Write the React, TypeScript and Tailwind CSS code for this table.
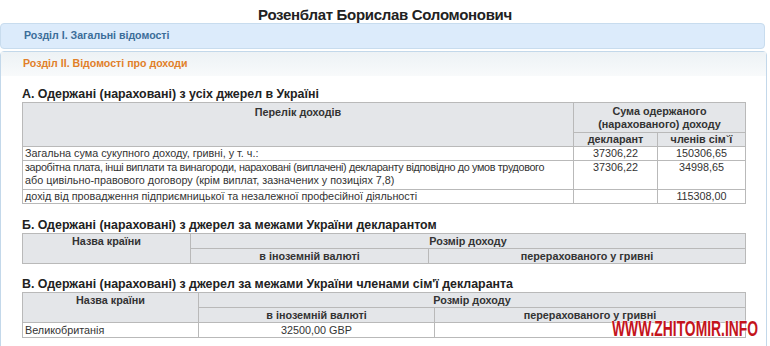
import React from 'react';

const cell = 'border border-[#b9b9b9] px-[2px] align-top';
const head = 'border border-[#b9b9b9] bg-[#e4e6e9] font-bold text-center align-top px-[2px]';

const App: React.FC = () => {
  return (
    <div
      className="relative w-[770px] h-[346px] overflow-hidden bg-white text-[#222]"
      style={{ fontFamily: '"Liberation Sans", Arial, sans-serif' }}
    >
      <h1 className="pt-[5px] h-[23px] text-center text-[15px] leading-[19px] tracking-[-0.3px] font-bold text-[#222]">
        Розенблат Борислав Соломонович
      </h1>

      <div className="w-[765px] h-[26px] flex items-center pl-[23px] bg-[#dcebfb] border border-[#c8dcee] rounded-[4px] text-[10.6px] font-bold text-[#3b6d99]">
        Розділ І. Загальні відомості
      </div>

      <div className="mt-[2px] w-[767px] h-[320px] border border-[#c3d8ea] rounded-t-[4px]">
        <div className="h-[24px] flex items-center pl-[22px] bg-gradient-to-b from-[#edf2f5] to-[#f8fafb] text-[10.6px] font-bold text-[#e17f29]">
          Розділ ІІ. Відомості про доходи
        </div>

        <div className="pl-[21px] text-[10.8px] leading-[13px] text-[#333]">
          <h2 className="mt-[10px] h-[16px] text-[12.4px] leading-[16px] font-bold text-[#222]">
            А. Одержані (нараховані) з усіх джерел в Україні
          </h2>
          <table className="w-[723px] border-collapse table-fixed">
            <colgroup>
              <col className="w-[551px]" />
              <col className="w-[84px]" />
              <col className="w-[88px]" />
            </colgroup>
            <tbody>
              <tr className="h-[30px]">
                <td rowSpan={2} className={`${head} pt-[3px]`}>Перелік доходів</td>
                <td colSpan={2} className={`${head} pt-[2px]`}>
                  Сума одержаного
                  <br />
                  (нарахованого) доходу
                </td>
              </tr>
              <tr className="h-[13px]">
                <td className={head}>декларант</td>
                <td className={head}>членів сім`ї</td>
              </tr>
              <tr className="h-[14px]">
                <td className={cell}>Загальна сума сукупного доходу, гривні, у т. ч.:</td>
                <td className={`${cell} text-center`}>37306,22</td>
                <td className={`${cell} text-center`}>150306,65</td>
              </tr>
              <tr className="h-[29px]">
                <td className={cell}>
                  <span className="block whitespace-nowrap tracking-[-0.35px]">
                    заробітна плата, інші виплати та винагороди, нараховані (виплачені) декларанту відповідно до умов трудового
                  </span>
                  <span className="block whitespace-nowrap">
                    або цивільно-правового договору (крім виплат, зазначених у позиціях 7,8)
                  </span>
                </td>
                <td className={`${cell} text-center`}>37306,22</td>
                <td className={`${cell} text-center`}>34998,65</td>
              </tr>
              <tr className="h-[14px]">
                <td className={cell}>дохід від провадження підприємницької та незалежної професійної діяльності</td>
                <td className={cell}></td>
                <td className={`${cell} text-center`}>115308,00</td>
              </tr>
            </tbody>
          </table>

          <h2 className="mt-[13px] h-[16px] text-[12.4px] leading-[16px] font-bold text-[#222]">
            Б. Одержані (нараховані) з джерел за межами України декларантом
          </h2>
          <table className="w-[723px] border-collapse table-fixed">
            <colgroup>
              <col className="w-[168px]" />
              <col className="w-[238px]" />
              <col className="w-[317px]" />
            </colgroup>
            <tbody>
              <tr className="h-[15px]">
                <td rowSpan={2} className={`${head} pt-[1px]`}>Назва країни</td>
                <td colSpan={2} className={`${head} pt-[1px]`}>Розмір доходу</td>
              </tr>
              <tr className="h-[15px]">
                <td className={`${head} pt-[1px]`}>в іноземній валюті</td>
                <td className={`${head} pt-[1px]`}>перерахованого у гривні</td>
              </tr>
            </tbody>
          </table>

          <h2 className="mt-[12px] h-[16px] text-[12.4px] leading-[16px] font-bold text-[#222]">
            В. Одержані (нараховані) з джерел за межами України членами сім'ї декларанта
          </h2>
          <table className="w-[723px] border-collapse table-fixed">
            <colgroup>
              <col className="w-[176px]" />
              <col className="w-[236px]" />
              <col className="w-[311px]" />
            </colgroup>
            <tbody>
              <tr className="h-[14px]">
                <td rowSpan={2} className={`${head} pt-[1px]`}>Назва країни</td>
                <td colSpan={2} className={`${head} pt-[1px]`}>Розмір доходу</td>
              </tr>
              <tr className="h-[15px]">
                <td className={`${head} pt-[1px]`}>в іноземній валюті</td>
                <td className={`${head} pt-[1px]`}>перерахованого у гривні</td>
              </tr>
              <tr className="h-[15px]">
                <td className={`${cell} pt-[1px]`}>Великобританія</td>
                <td className={`${cell} pt-[1px] text-center`}>32500,00 GBP</td>
                <td className={cell}></td>
              </tr>
            </tbody>
          </table>
        </div>
      </div>

      <div
        className="absolute left-[612px] top-[317px] text-[22px] leading-[24px] font-bold text-[#c4141c] origin-left [transform:scaleX(0.63)] [text-shadow:0_0_2px_#fff,0_0_2px_#fff]"
        style={{ fontFamily: '"Liberation Sans", sans-serif' }}
      >
        WWW.ZHITOMIR.INFO
      </div>
    </div>
  );
};

export default App;
